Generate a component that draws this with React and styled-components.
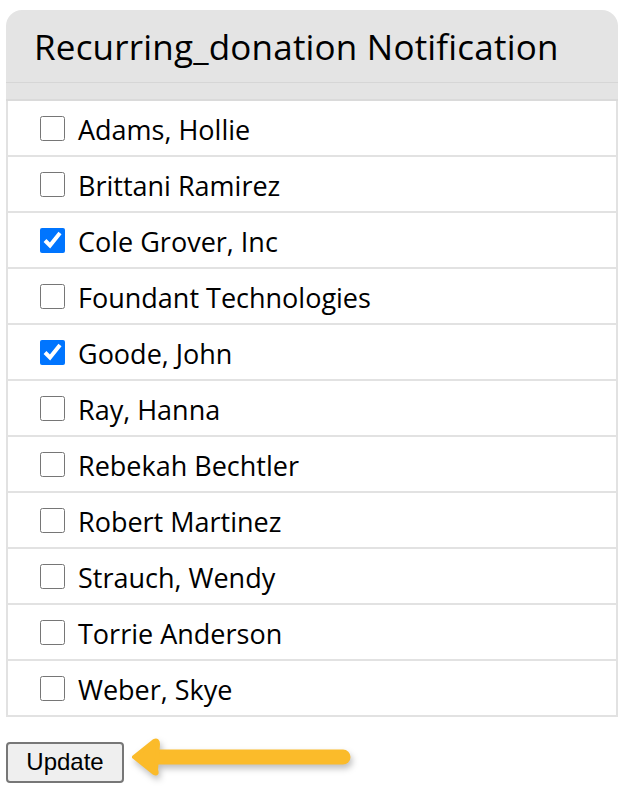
import React from "react";
import styled, { createGlobalStyle } from "styled-components";

const Global = createGlobalStyle`
  body {
    margin: 0;
    background: #fff;
    font-family: "Open Sans", "Noto Sans", sans-serif;
    color: #000;
  }
`;

const Page = styled.div`
  padding: 10px 0 0 6px;
`;

const Card = styled.div`
  width: 612px;
  border-radius: 16px 16px 0 0;
  overflow: hidden;
`;

const Header = styled.div`
  height: 72px;
  background: #e4e4e4;
  display: flex;
  align-items: center;
  padding-left: 28px;
  font-size: 35px;
  letter-spacing: 0.2px;
  border-bottom: 1px solid #d6d6d6;
`;

const Band = styled.div`
  height: 16px;
  background: #e4e4e4;
  border-bottom: 2px solid #dadada;
`;

const List = styled.div`
  border: 2px solid #e2e2e2;
  border-top: none;
`;

const Row = styled.label`
  height: 54px;
  display: flex;
  align-items: center;
  gap: 13px;
  padding-left: 32px;
  font-size: 27px;
  border-bottom: 2px solid #e2e2e2;
  &:last-child {
    border-bottom: none;
  }
`;

const Name = styled.span`
  padding-top: 3px;
`;

const Box = styled.input.attrs({ type: "checkbox" })`
  width: 25px;
  height: 25px;
  margin: 0;
  accent-color: #0075ff;
`;

const Footer = styled.div`
  display: flex;
  align-items: center;
  gap: 6px;
  margin-top: 20px;
`;

const Button = styled.button`
  width: 118px;
  height: 41px;
  font-family: "Liberation Sans", Arial, sans-serif;
  font-size: 24px;
  color: #000;
  background: #efefef;
  border: 2px solid #777;
  border-radius: 4px;
  padding: 0;
`;

const Arrow = () => (
  <svg width="230" height="50" viewBox="0 0 230 50" style={{ filter: "drop-shadow(2px 4px 3px rgba(0,0,0,0.25))" }}>
    <line x1="22" y1="20" x2="213" y2="20" stroke="#fbbb2a" strokeWidth="15" strokeLinecap="round" />
    <path d="M4 20 L24 4 Q28 2 28 7 L26 33 Q28 38 24 36 Z" fill="#fbbb2a" stroke="#fbbb2a" strokeWidth="4" strokeLinejoin="round" />
  </svg>
);

const people = [
  ["Adams, Hollie", false],
  ["Brittani Ramirez", false],
  ["Cole Grover, Inc", true],
  ["Foundant Technologies", false],
  ["Goode, John", true],
  ["Ray, Hanna", false],
  ["Rebekah Bechtler", false],
  ["Robert Martinez", false],
  ["Strauch, Wendy", false],
  ["Torrie Anderson", false],
  ["Weber, Skye", false],
];

export default function App() {
  return (
    <Page>
      <Global />
      <Card>
        <Header>Recurring_donation Notification</Header>
        <Band />
        <List>
          {people.map(([name, checked]) => (
            <Row key={name}>
              <Box defaultChecked={checked} />
              <Name>{name}</Name>
            </Row>
          ))}
        </List>
      </Card>
      <Footer>
        <Button>Update</Button>
        <Arrow />
      </Footer>
    </Page>
  );
}
